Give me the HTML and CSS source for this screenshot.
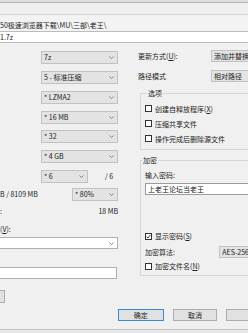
FILE: index.html
```html
<!DOCTYPE html>
<html lang="zh-CN">
<head>
  <meta charset="UTF-8" />
  <meta name="viewport" content="width=device-width, initial-scale=1.0"/>
  <title>添加到压缩包</title>
  <link rel="stylesheet" href="styles.css">
</head>
<body>

<div class="dialog">
  <div class="titlebar"></div>
  <div class="path">50极速浏览器下载\MU\三部\老王\</div>
  <div class="name">1.7z</div>

  <div class="main">
    <!-- left column: format / level / method ... -->
    <div class="left">
      <div class="lrow"><div class="combo">7z<svg class="arrow" width="5" height="3" viewBox="0 0 5 3"><path d="M0.5 0.5L2.5 2.5L4.5 0.5"/></svg></div></div>
      <div class="lrow"><div class="combo">5 - 标准压缩<svg class="arrow" width="5" height="3" viewBox="0 0 5 3"><path d="M0.5 0.5L2.5 2.5L4.5 0.5"/></svg></div></div>
      <div class="lrow"><div class="combo">* LZMA2<svg class="arrow" width="5" height="3" viewBox="0 0 5 3"><path d="M0.5 0.5L2.5 2.5L4.5 0.5"/></svg></div></div>
      <div class="lrow short"><div class="combo">* 16 MB<svg class="arrow" width="5" height="3" viewBox="0 0 5 3"><path d="M0.5 0.5L2.5 2.5L4.5 0.5"/></svg></div></div>
      <div class="lrow"><div class="combo">* 32<svg class="arrow" width="5" height="3" viewBox="0 0 5 3"><path d="M0.5 0.5L2.5 2.5L4.5 0.5"/></svg></div></div>
      <div class="lrow"><div class="combo">* 4 GB<svg class="arrow" width="5" height="3" viewBox="0 0 5 3"><path d="M0.5 0.5L2.5 2.5L4.5 0.5"/></svg></div></div>
      <div class="lrow short">
        <div class="combo small">* 6<svg class="arrow" width="5" height="3" viewBox="0 0 5 3"><path d="M0.5 0.5L2.5 2.5L4.5 0.5"/></svg></div>
        <span class="of">/ 6</span>
      </div>
      <div class="mem">
        <span>B / 8109 MB</span>
        <div class="combo pct">* 80%<svg class="arrow" width="5" height="3" viewBox="0 0 5 3"><path d="M0.5 0.5L2.5 2.5L4.5 0.5"/></svg></div>
      </div>
      <div class="decomp">
        <span>:</span>
        <span class="val">18 MB</span>
      </div>
      <div class="vol-label">(<u>V</u>):</div>
      <div class="edit-combo"><svg class="arrow" width="5" height="3" viewBox="0 0 5 3"><path d="M0.5 0.5L2.5 2.5L4.5 0.5"/></svg></div>
      <div class="edit"></div>
      <div class="btn stub"></div>
    </div>

    <!-- right column: update mode / options / encryption -->
    <div class="right">
      <div class="rrow">
        <span class="lbl">更新方式(<u>U</u>):</span>
        <div class="combo wide">添加并替换</div>
      </div>
      <div class="rrow short">
        <span class="lbl">路径模式</span>
        <div class="combo wide">相对路径</div>
      </div>

      <fieldset class="group">
        <legend class="opts">选项</legend>
        <div class="check"><span class="cb"></span>创建自释放程序(<u>X</u>)</div>
        <div class="check"><span class="cb"></span>压缩共享文件</div>
        <div class="check"><span class="cb"></span>操作完成后删除源文件</div>
      </fieldset>

      <fieldset class="group enc">
        <legend class="enc-title">加密</legend>
        <div class="pw-label">输入密码:</div>
        <div class="pw">上老王论坛当老王</div>
        <div class="check show"><span class="cb on"><svg width="5" height="5" viewBox="0 0 5 5"><path d="M0.5 2.6L2 4L4.5 0.8"/></svg></span>显示密码(<u>S</u>)</div>
        <div class="algo">
          <span class="algo-lbl">加密算法:</span>
          <div class="combo wide">AES-256</div>
        </div>
        <div class="check"><span class="cb"></span>加密文件名(<u>N</u>)</div>
      </fieldset>
    </div>
  </div>

  <div class="footer">
    <div class="btn ok">确定</div>
    <div class="btn">取消</div>
    <div class="btn"></div>
  </div>
  <div class="bottom"></div>
</div>

</body>
</html>
```

FILE: styles.css
```css
* {
  box-sizing: border-box;
}

body {
  margin: 0;
  width: 248px;
  height: 333px;
  overflow: hidden;
  background: #f0f0f0;
  color: #222;
  font-family: "Noto Sans CJK SC", "Noto Sans", sans-serif;
  font-size: 7px;
}

.dialog {
  width: 272px;
}

.titlebar {
  height: 3px;
  background: #dedede;
  border-bottom: 1px solid #b8b8b8;
}

.path {
  margin-top: 11px;
  height: 17px;
  padding-top: 5px;
  line-height: 10px;
  white-space: nowrap;
  background: #f3f3f3;
  border-top: 1px solid #d6d6d6;
}

.name {
  height: 12px;
  line-height: 10px;
  background: #fff;
  border-top: 1px solid #bdbdbd;
  border-bottom: 1px solid #bdbdbd;
}

.main {
  display: grid;
  grid-template-columns: 118px 134px;
  column-gap: 20px;
  margin-top: 7px;
}

/* combo boxes */
.combo {
  display: flex;
  align-items: center;
  justify-content: space-between;
  width: 77px;
  height: 13px;
  padding: 0 3px 0 2px;
  line-height: 11px;
  white-space: nowrap;
  overflow: hidden;
  background: #e3e3e3;
  border: 1px solid #c2c2c2;
}

.arrow {
  flex: none;
}

.arrow path {
  fill: none;
  stroke: #6a6a6a;
  stroke-width: 0.8;
}

.combo.small {
  width: 47px;
}

.combo.pct {
  width: 46px;
  margin-left: auto;
}

.combo.wide {
  width: 60px;
  height: 12px;
  justify-content: flex-start;
}

/* left column */
.lrow {
  display: flex;
  align-items: flex-start;
  height: 20px;
  padding-top: 1px;
  padding-left: 41px;
}

.lrow.short {
  height: 19px;
}

.of {
  margin-left: 17px;
  line-height: 13px;
}

.mem {
  display: flex;
  height: 16px;
  line-height: 13px;
  white-space: nowrap;
}

.decomp {
  display: flex;
  height: 14px;
  line-height: 14px;
}

.val {
  margin-left: auto;
}

.vol-label {
  height: 17px;
  padding-top: 5px;
  line-height: 12px;
}

.edit-combo {
  display: flex;
  align-items: center;
  justify-content: flex-end;
  margin-top: 2px;
  height: 12px;
  padding-right: 3px;
  background: #fff;
  border: 1px solid #b0b0b0;
  border-left: none;
}

.edit {
  margin-top: 18px;
  width: 117px;
  height: 12px;
  background: #fff;
  border: 1px solid #b0b0b0;
  border-left: none;
}

/* buttons */
.btn {
  width: 54px;
  height: 12px;
  line-height: 10px;
  text-align: center;
  background: #e1e1e1;
  border: 1px solid #adadad;
}

.btn.ok {
  border-color: #3b8ad6;
}

.btn.stub {
  margin-top: 11px;
  width: 5px;
  height: 13px;
  border-left: none;
}

/* right column */
.rrow {
  display: flex;
  align-items: flex-start;
  height: 20px;
  line-height: 12px;
}

.rrow.short {
  height: 19px;
}

.lbl {
  width: 73px;
  white-space: nowrap;
}

.group {
  margin: 0 0 0 2px;
  padding: 4px 0 3px 4px;
  min-width: 0;
  border: 1px solid #d5d5d5;
}

.group legend {
  padding: 0 1px;
  line-height: 8px;
}

.opts {
  margin-left: 2px;
}

.enc {
  margin-top: 6px;
  padding-top: 0;
  padding-bottom: 2px;
}

.enc-title {
  margin-left: -3px;
}

.check {
  display: flex;
  align-items: center;
  height: 15px;
  white-space: nowrap;
}

.enc .check {
  height: 14px;
}

.cb {
  display: flex;
  align-items: center;
  justify-content: center;
  width: 7px;
  height: 7px;
  margin-right: 3px;
  background: #fff;
  border: 1px solid #333;
}

.cb path {
  fill: none;
  stroke: #222;
  stroke-width: 0.9;
}

.pw-label {
  margin-top: 6px;
  line-height: 10px;
}

.pw {
  margin-top: 3px;
  width: 130px;
  height: 12px;
  padding-left: 2px;
  line-height: 10px;
  white-space: nowrap;
  background: #fff;
  border: 1px solid #9c9c9c;
}

.enc .check.show {
  margin-top: 34px;
}

.algo {
  display: flex;
  align-items: flex-start;
  margin-top: 2px;
  height: 14px;
  line-height: 14px;
}

.algo-lbl {
  width: 88px;
}

.algo .combo {
  margin-top: 1px;
}

.footer {
  display: flex;
  gap: 9px;
  margin-top: 6px;
  padding-left: 118px;
}

.footer .btn:nth-child(2) {
  width: 53px;
}

.bottom {
  margin-top: 8px;
  height: 10px;
  background: #e8e8e8;
  border-top: 1px solid #c4c4c4;
}
```
